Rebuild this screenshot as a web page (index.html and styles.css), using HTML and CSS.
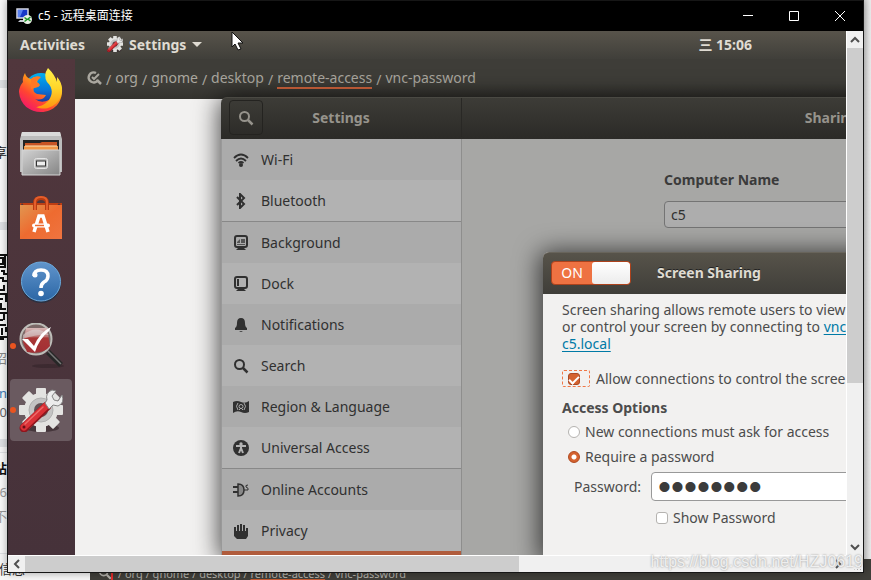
FILE: index.html
```html
<!DOCTYPE html>
<html lang="en">
<head>
<meta charset="utf-8">
<title>c5 - 远程桌面连接</title>
<link rel="stylesheet" href="styles.css">
</head>
<body>
<svg class="defs" width="0" height="0" aria-hidden="true">
  <defs>
    <linearGradient id="fox" x1=".9" y1="0" x2=".1" y2="1"><stop offset="0" stop-color="#fff44f"/><stop offset=".35" stop-color="#ffa515"/><stop offset=".65" stop-color="#ff4630"/><stop offset="1" stop-color="#f0087c"/></linearGradient>
    <linearGradient id="tail" x1="0" y1="0" x2="0" y2="1"><stop offset="0" stop-color="#fff14a"/><stop offset=".5" stop-color="#ffd52a"/><stop offset="1" stop-color="#ff9310"/></linearGradient>
    <linearGradient id="globe" x1="0" y1="0" x2="0" y2="1"><stop offset="0" stop-color="#00b0f0"/><stop offset=".5" stop-color="#0876d8"/><stop offset="1" stop-color="#271d82"/></linearGradient>
    <linearGradient id="metal" x1="0" y1="0" x2="1" y2="1"><stop offset="0" stop-color="#d2d2d2"/><stop offset="1" stop-color="#858585"/></linearGradient>
    <linearGradient id="bag" x1="0" y1="0" x2="1" y2="1"><stop offset="0" stop-color="#e19650"/><stop offset=".5" stop-color="#ee6b30"/><stop offset="1" stop-color="#ef7440"/></linearGradient>
    <linearGradient id="help" x1="0" y1="0" x2="0" y2="1"><stop offset="0" stop-color="#6195cc"/><stop offset="1" stop-color="#2b66a5"/></linearGradient>
    <linearGradient id="lens" x1="0" y1="0" x2="0" y2="1"><stop offset="0" stop-color="#d8b8b8"/><stop offset=".35" stop-color="#b9716f"/><stop offset=".4" stop-color="#a93736"/><stop offset="1" stop-color="#a22f34"/></linearGradient>
    <symbol id="gear" viewBox="0 0 44 44">
      <ellipse cx="23" cy="40" rx="17" ry="4" fill="#2f2025" opacity=".6"/>
      <g fill="#e3e3e1">
        <rect x="17" y="0" width="10" height="44" rx="1"/><rect x="17" y="0" width="10" height="44" rx="1" transform="rotate(45 22 22)"/><rect x="17" y="0" width="10" height="44" rx="1" transform="rotate(90 22 22)"/><rect x="17" y="0" width="10" height="44" rx="1" transform="rotate(135 22 22)"/>
        <circle cx="22" cy="22" r="17"/>
      </g>
      <circle cx="22" cy="22" r="12" fill="#c4c4c4" stroke="#b0b0b0"/><circle cx="22" cy="22" r="7" fill="#635155"/>
      <path d="M5 40L28 18" stroke="#8f161e" stroke-width="9" stroke-linecap="round"/>
      <path d="M5 39L27 18" stroke="#d93137" stroke-width="7" stroke-linecap="round"/>
      <path d="M6 36L24 19" stroke="#ee6a68" stroke-width="1.500" stroke-linecap="round"/>
      <path d="M26 15L28 12Q26 5 33 2L37 3L33 8L35 12L39 13L43 7Q46 15 39 18L34 17L30 21Z" fill="#ececec" stroke="#858585"/>
      <circle cx="5" cy="39" r="1.500" fill="#671019"/>
    </symbol>
    <symbol id="magnifier" viewBox="0 0 16 16"><circle cx="6.500" cy="6.500" r="4.500" fill="none" stroke="currentColor" stroke-width="2"/><path d="M10 10l4.500 4.500" stroke="currentColor" stroke-width="2.500"/></symbol>
  </defs>
</svg>

<aside class="backdrop-page" aria-hidden="true">
  <i class="card card-a"></i><i class="card card-b"></i><i class="card card-c"></i>
  <svg class="qr" width="7" height="88" viewBox="0 0 7 88"><path d="M0 1H7M0 13H6M5 1V13M0 4H3V10H0M1 17H4V20H7M0 24H3V27H7M4 31V36H0M0 40H5M6 39V48M0 45H3M1 49V55H6M0 59H7M4 60V66M0 66H3M0 71H6M2 74V81M6 73V78M0 83H7M4 85H0" fill="none" stroke="#111" stroke-width="2"/></svg>
  <span class="scrap s1">享</span><span class="scrap s2">招</span><span class="scrap s3">n</span><span class="scrap s4">0</span><span class="scrap s5">站</span><span class="scrap s6">6</span><span class="scrap s7">不</span><span class="scrap s8">信息</span>
</aside>
<div class="backdrop-shot" aria-hidden="true"><svg width="14" height="14"><use href="#magnifier"/></svg><i></i><span>/ org / gnome / desktop / <u>remote-access</u> / vnc-password</span></div>

<main class="rdp">
  <header class="titlebar">
    <svg width="16" height="16" viewBox="0 0 16 16"><path d="M1 1h11v9H1z" fill="#1638c8" stroke="#d7dae6" stroke-width="1.500"/><path d="M2 2h5l-3 7H2z" fill="#5a82f0"/><path d="M4 12h5v2H2z" fill="#c7cad4"/><circle cx="11.500" cy="11.500" r="4.500" fill="#e9f0e5"/><path d="M8.500 9.500l2.500 2-2.500 2M14.500 9l-2.500 2 2.500 2" fill="none" stroke="#1d9328" stroke-width="1.500"/></svg>
    <h1>c5 - 远程桌面连接</h1>
    <button aria-label="Minimize"><svg width="12" height="12" viewBox="0 0 12 12"><path d="M1 5.500h10"/></svg></button>
    <button aria-label="Maximize"><svg width="12" height="12" viewBox="0 0 12 12"><path d="M1.500 1.500h9v9h-9z"/></svg></button>
    <button aria-label="Close"><svg width="12" height="12" viewBox="0 0 12 12"><path d="M1 1l10 10M11 1L1 11"/></svg></button>
  </header>

  <div class="viewport">
    <div class="screen">
      <nav class="topbar">
        <button>Activities</button>
        <button class="appmenu"><svg width="16" height="16"><use href="#gear"/></svg>Settings<i class="caret"></i></button>
        <button class="clock">三 15:06</button>
      </nav>
      <nav class="dock">
        <a href="#" aria-label="Firefox"><svg width="46" height="46" viewBox="0 0 46 46">
          <circle cx="23" cy="23" r="17" fill="url(#globe)"/>
          <path d="M7 6Q4 11 5 15Q1 20 1 25C2 38 12 45 23 45C36 45 45 35 44 22Q43 16 40 12Q42 25 31 33Q23 37 17 32Q25 34 28 28L19 27Q14 25 16 20Q20 21 22 18Q17 15 21 10Q16 9 13 12Q8 11 7 6Z" fill="url(#fox)"/>
          <path d="M30 1Q25 8 29 15C36 22 34 28 31 33C27 38 20 40 18 40C32 46 45 34 44 21Q43 14 39 10L39 15Q37 8 30 1Z" fill="url(#tail)"/>
          <path d="M13 12Q18 8 23 10L18 15Q24 17 20 20L13 22Z" fill="#ff7824"/></svg></a>
        <a href="#" aria-label="Files"><svg width="44" height="46" viewBox="0 0 44 46"><path d="M3 1h38l2 7v33H1V8z" fill="#bcbcbc"/><path d="M3 1h38l1 4H2z" fill="#dadada"/><path d="M4 9h36v11H4z" fill="#242424"/><path d="M6 12h15l2-1h15v8H6z" fill="#c85423"/><path d="M5 15h34v4H5z" fill="#f19848"/><path d="M6 15h32" stroke="#ffe6b8"/><path d="M3 19h38v25H3z" fill="url(#metal)" stroke="#d4d4d4"/><rect x="15.500" y="27.500" width="13" height="10" rx="2" fill="#bbb" stroke="#e4e4e4"/><rect x="17.500" y="30" width="9" height="5" fill="#eee" stroke="#333"/></svg></a>
        <a href="#" aria-label="Ubuntu Software"><svg width="44" height="46" viewBox="0 0 44 46"><path d="M1 8h42v4l-3-4-3 4H6l-3-4-2 4z" fill="#bd3e13"/><path d="M1 10h42v34H1z" fill="url(#bag)"/><path d="M16 15V8q0-5 6-5t6 5v7" fill="none" stroke="#b73c12" stroke-width="4"/><path d="M16 15V7q0-5 6-5t6 5v8" fill="none" stroke="#e45e2c" stroke-width="2"/><path d="M15 37L20 21h4l5 16" fill="none" stroke="#fff" stroke-width="3.500"/><rect x="13" y="28.500" width="18" height="4" rx="2" fill="#fff"/><path d="M16 30.500h9" stroke="#ed6b30" stroke-width="1.500"/></svg></a>
        <a href="#" aria-label="Help"><svg width="42" height="42" viewBox="0 0 42 42"><circle cx="21" cy="22" r="20" fill="#202f43" opacity=".7"/><circle cx="21" cy="20.500" r="19.500" fill="url(#help)" stroke="#6caadc"/><path d="M14 15q0-6 7-6 7 0 7 6 0 4-4 6-3 2-3 6" fill="none" stroke="#fff" stroke-width="3.500"/><circle cx="15" cy="14" r="2.500" fill="#fff"/><circle cx="21" cy="32.500" r="2.800" fill="#fff"/></svg></a>
        <a href="#" class="running" aria-label="dconf Editor"><svg width="46" height="46" viewBox="0 0 46 46"><ellipse cx="30" cy="43" rx="16" ry="2" fill="#281b20" opacity=".4"/><path d="M30 29L43 42" stroke="#272727" stroke-width="5.500"/><path d="M30 28L43 41" stroke="#777" stroke-width="1.500"/><circle cx="18" cy="16" r="15.500" fill="#7c6867" stroke="#bdbdb8" stroke-width="2"/><path d="M8 5L29 5L32 23Q25 32 9 29L5 19Z" fill="url(#lens)"/><path d="M5 12Q18 1 31 12Q20 11 5 16Z" fill="#ddd" opacity=".55"/><path d="M4 16L10 16L16 23Q22 9 33 4L31 8Q21 16 17 29Z" fill="#fff"/></svg></a>
        <a href="#" class="running active" aria-label="Settings"><svg width="44" height="44"><use href="#gear"/></svg></a>
      </nav>
      <section class="dconf">
        <div class="pathbar"><svg width="16" height="16" viewBox="0 0 16 16"><path d="M9 2A5 5 0 1 0 11 9M10 9l4 4" fill="none" stroke="currentColor" stroke-width="2.500"/><path d="M5 6l2 2 5-5" fill="none" stroke="currentColor" stroke-width="2"/></svg><span>/</span><a href="#">org</a><span>/</span><a href="#">gnome</a><span>/</span><a href="#">desktop</a><span>/</span><a href="#" class="current">remote-access</a><span>/</span><a href="#">vnc-password</a></div>
      </section>

      <section class="settings">
        <header class="settings-head">
          <div class="head-left"><button aria-label="Search settings"><svg width="16" height="16"><use href="#magnifier"/></svg></button><h2>Settings</h2></div>
          <h2 class="head-right">Sharing</h2>
        </header>
        <div class="settings-body">
          <nav class="categories">
            <a href="#"><svg width="16" height="16" viewBox="0 0 16 16"><g fill="none" stroke="currentColor" stroke-width="1.800"><path d="M1 6q7-7 14 0M3 9q5-5 10 0M5.500 11q2.500-2 5 0"/></g><circle cx="8" cy="13" r="2"/></svg>Wi-Fi</a>
            <a href="#"><svg width="16" height="16" viewBox="0 0 16 16"><path d="M4 4l7 7-4 4V1l4 4-7 7" fill="none" stroke="currentColor" stroke-width="2"/></svg>Bluetooth</a>
            <a href="#" class="group"><svg width="16" height="16" viewBox="0 0 16 16"><rect x="2" y="1" width="12" height="11" rx="2" fill="none" stroke="currentColor" stroke-width="2"/><path d="M4 9h8v1H4zM4 7l3-3v4H4zM8 4h4v4H8z" opacity=".7"/><path d="M5 13h6l2 2H3z"/></svg>Background</a>
            <a href="#"><svg width="16" height="16" viewBox="0 0 16 16"><rect x="2" y="1" width="12" height="11" rx="2" fill="none" stroke="currentColor" stroke-width="2"/><path d="M4 3h2v7H4zM5 13h6l2 2H3z"/></svg>Dock</a>
            <a href="#"><svg width="16" height="16" viewBox="0 0 16 16"><path d="M8 1q4 0 4 5 0 4 2 5v2H2v-2q2-1 2-5 0-5 4-5zM6 14h4l-2 1z"/></svg>Notifications</a>
            <a href="#"><svg width="16" height="16"><use href="#magnifier"/></svg>Search</a>
            <a href="#"><svg width="16" height="16" viewBox="0 0 16 16"><path d="M0 3q4-2 8 0t8-1v11q-4 2-8 0t-8 1z"/><g fill="none" stroke="#aaa"><circle cx="8" cy="7.500" r="2"/><path d="M5 4q-3 3 0 7M11 4q3 3 0 7M6 11l2-2 2 2"/></g></svg>Region &amp; Language</a>
            <a href="#"><svg width="16" height="16" viewBox="0 0 16 16"><circle cx="8" cy="8" r="8"/><circle cx="8" cy="4" r="1.700" fill="#b2b2b2"/><path d="M3 6h10M8 6v3M8 8l-2 5M8 8l2 5" fill="none" stroke="#b2b2b2" stroke-width="2"/></svg>Universal Access</a>
            <a href="#" class="group"><svg width="16" height="16" viewBox="0 0 16 16"><path d="M0 5h5M0 10h5" stroke="currentColor" stroke-width="2"/><path d="M5 2q6 0 6 6t-6 6z" fill="#888" stroke="currentColor" stroke-width="1.500"/><path d="M15 3q-3 0-2 2 3 1 2 3h-4" fill="none" stroke="currentColor"/></svg>Online Accounts</a>
            <a href="#"><svg width="16" height="16" viewBox="0 0 16 16"><path d="M1 4h2v4h1V2h2v6h1V1h2v7h1V2h2v6h1V5h2v8l-2 3H4l-3-3z"/></svg>Privacy</a>
            <a href="#" class="selected" aria-label="Sharing"></a>
          </nav>
          <div class="panel"><label for="host">Computer Name</label><input id="host" type="text" value="c5"></div>
        </div>
      </section>

      <section class="dialog">
        <header><button class="switch" role="switch" aria-checked="true"><span>ON</span><i></i></button><h2>Screen Sharing</h2></header>
        <div class="dialog-body">
          <p>Screen sharing allows remote users to view<br>or control your screen by connecting to <a href="#">vnc://</a><br><a href="#">c5.local</a></p>
          <label class="allow"><span class="focus"><input type="checkbox" checked></span>Allow connections to control the screen</label>
          <h3>Access Options</h3>
          <label class="option"><input type="radio" name="access">New connections must ask for access</label>
          <label class="option"><input type="radio" name="access" checked>Require a password</label>
          <div class="password"><label for="pw">Password:</label><input id="pw" type="password" value="password"></div>
          <label class="show"><input type="checkbox">Show Password</label>
          <h3 class="networks">Networks</h3>
        </div>
      </section>
      <svg class="pointer" width="14" height="21" viewBox="0 0 14 21"><path d="M1 1v15l3-3 3 6 3-1-3-6h5z" fill="#fff" stroke="#111"/></svg>
    </div>
    <div class="vscroll"><button aria-label="Scroll up"><svg width="10" height="8" viewBox="0 0 10 8"><path d="M1 6l4-4 4 4"/></svg></button><i></i><button aria-label="Scroll down"><svg width="10" height="8" viewBox="0 0 10 8"><path d="M1 2l4 4 4-4"/></svg></button></div>
    <div class="hscroll"><button aria-label="Scroll left"><svg width="8" height="10" viewBox="0 0 8 10"><path d="M6 1L2 5l4 4"/></svg></button><i></i><button aria-label="Scroll right"><svg width="8" height="10" viewBox="0 0 8 10"><path d="M2 1l4 4-4 4"/></svg></button></div>
    <div class="grip"></div>
  </div>
</main>
<div class="watermark">https://blog.csdn.net/HZJ0619</div>
</body>
</html>
```
FILE: styles.css
```css
* { box-sizing: border-box; }
body {
  margin: 0;
  height: 100vh;
  position: relative;
  overflow: hidden;
  background: linear-gradient(to left, #ececec, #d2d2d2 8px, #ececec 9px);
  font: 14px/17px "Noto Sans", "Noto Sans CJK SC", sans-serif;
  white-space: nowrap;
}
a { color: inherit; text-decoration: none; }
h1, h2, h3, p { margin: 0; font-size: inherit; }
button { border: 0; padding: 0; background: none; color: inherit; font: inherit; }
input { margin: 0; font: inherit; }
svg { display: block; flex: none; fill: currentColor; }
.defs { position: absolute; }

/* Web page and picture partly hidden behind the window */
.backdrop-page { position: absolute; inset: 0 auto 0 0; width: 90px; overflow: hidden; background: #f7f7f7; }
.card { position: absolute; left: 0; width: 66px; border: solid #dfe1e4; border-width: 8px 0; background: #f9f9f9; }
.card-a { top: 80px; height: 150px; }
.card-b { top: 222px; height: 225px; }
.card-c { top: 452px; height: 102px; border-width: 1px 0; }
.qr { position: absolute; left: 0; top: 254px; }
.scrap { position: absolute; right: 83px; font-size: 13px; color: #444; }
.s1 { top: 144px; color: #222; }
.s2 { top: 350px; color: #888; }
.s3 { top: 385px; color: #3c78b4; }
.s4 { top: 404px; color: #666; }
.s5 { top: 460px; color: #111; font-weight: 700; }
.s6 { top: 484px; color: #999; }
.s7 { top: 508px; color: #999; }
.s8 { top: 561px; right: 65px; color: #333; }
.backdrop-shot {
  position: absolute; left: 90px; right: 0; bottom: 0; height: 21px;
  display: flex; align-items: center; gap: 5px; padding: 7px 8px 0;
  background: #403f3a; color: #b4b2ac; font-size: 11px;
}
.backdrop-shot i { width: 2px; height: 18px; margin-left: -6px; background: #e02c2c; }
.backdrop-shot u { text-decoration-color: #c55c34; }

/* Remote desktop window */
.rdp {
  position: absolute; inset: 0 7px 7px;
  display: flex; flex-direction: column;
  border: 1px solid #161616;
  background: #000;
  box-shadow: 0 0 8px rgba(0, 0, 0, .35);
}
.titlebar { display: flex; align-items: center; height: 30px; padding-left: 8px; color: #fff; flex: none; }
.titlebar h1 { flex: 1; margin-left: 6px; font: 12px/16px "Noto Sans", "Noto Sans CJK SC", sans-serif; }
.titlebar button { width: 46px; height: 30px; display: grid; place-items: center; }
.titlebar button svg { fill: none; stroke: #fff; }
.viewport { flex: 1; min-height: 0; display: grid; grid-template: 1fr 17px / 1fr 17px; background: #f0f0f0; }
.vscroll, .hscroll { display: flex; border: 0 solid #fff; background: #f0f0f0; }
.vscroll { flex-direction: column; border-left-width: 1px; }
.hscroll { border-top-width: 1px; }
.vscroll button, .hscroll button { flex: none; display: grid; place-items: center; width: 17px; height: 17px; }
.vscroll svg, .hscroll svg { fill: none; stroke: #505050; stroke-width: 2; }
.vscroll i { height: 64%; margin-bottom: auto; background: #cdcdcd; }
.hscroll i { width: 59%; margin-right: auto; background: #cdcdcd; }
.vscroll button { width: 16px; }
.hscroll button { height: 16px; }
.grip { margin: 7px 1px 1px 7px; background: radial-gradient(circle, #aaa 1px, transparent 1px) 0 0 / 3px 3px; clip-path: polygon(100% 0, 100% 100%, 0 100%); }

/* Remote GNOME desktop */
.screen {
  position: relative; overflow: hidden; min-width: 0;
  display: grid; grid-template: 28px 1fr / 67px 1fr;
  background: #f2f1f0;
}
.topbar {
  grid-column: 1 / -1; display: flex; align-items: center; gap: 22px; padding: 0 94px 2px 12px;
  background: linear-gradient(#58544b, #403f3a); color: #dfdbd2; font-weight: 700;
}
.appmenu { display: flex; align-items: center; gap: 6px; }
.caret { border: 5px solid transparent; border-top-color: currentColor; border-bottom: 0; }
.clock { margin-left: auto; }
.dock { display: flex; flex-direction: column; gap: 2px; padding-left: 2px; background: linear-gradient(#51373d, #46323a); }
.dock a { position: relative; width: 62px; height: 62px; flex: none; display: grid; place-items: center; border-radius: 4px; }
.dock .active { background: #6a5a60; }
.running::before { content: ""; position: absolute; left: 0; top: 28px; width: 6px; height: 6px; border-radius: 50%; background: #e95420; }
.dconf { min-width: 0; }
.pathbar {
  display: flex; align-items: center; gap: 4px; height: 40px; padding: 0 12px;
  background: linear-gradient(#3e3d38 60%, #33322e); color: #aaa79f;
}
.pathbar svg { margin-right: -1px; }
.pathbar a { line-height: 18px; border-bottom: 2px solid transparent; }
.pathbar .current { border-color: #d5663e; }

.settings {
  position: absolute; left: 213px; top: 66px; bottom: 0; width: 980px;
  display: flex; flex-direction: column;
  border-radius: 6px 6px 0 0;
  box-shadow: 0 3px 24px 2px rgba(0, 0, 0, .7);
  color: #303030;
}
.settings-head {
  display: flex; flex: none; height: 42px; padding-bottom: 2px;
  border-top: 1px solid #4a4943; border-radius: 6px 6px 0 0;
  background: linear-gradient(#3d3c37, #2b2a27); color: #96938c;
}
.head-left { display: grid; grid-template-columns: 34px 1fr 34px; align-items: center; width: 241px; padding: 0 8px; border-right: 1px solid #292825; text-align: center; }
.head-left button { height: 35px; display: grid; place-items: center; border: 1px solid #242320; border-radius: 4px; }
.head-right { flex: 1; align-self: center; text-align: center; }
.settings-body { flex: 1; min-height: 0; display: flex; overflow: hidden; background: #a7a7a5; }
.categories { width: 241px; flex: none; border-right: 1px solid #8e8e8d; border-left: 1px solid #999; }
.categories a { display: flex; align-items: center; gap: 12px; height: 41px; padding-left: 11px; background: #ababab; }
.categories a:nth-child(even) { background: #b2b2b2; }
.categories .group { height: 42px; border-top: 1px solid #888; }
.categories .selected { background: #b05c3c; }
.panel { flex: 1; display: flex; flex-direction: column; gap: 13px; padding: 32px 202px; }
.panel label { font-weight: 700; color: #3b3b3b; }
.panel input { height: 27px; padding: 0 6px; border: 1px solid #747474; border-radius: 4px; background: #adadad; color: #303030; }

.dialog {
  position: absolute; left: 535px; top: 221px; bottom: 0; width: 460px;
  border-radius: 6px 6px 0 0; background: #f2f1f0; color: #4c4c4c;
  box-shadow: 0 3px 24px 4px rgba(0, 0, 0, .65);
}
.dialog header {
  display: flex; align-items: center; gap: 26px; height: 42px; padding: 0 8px 2px;
  border-top: 1px solid #68645b; border-radius: 6px 6px 0 0;
  background: linear-gradient(#57534a, #3f3e39); color: #dfdbd2; text-shadow: 0 -1px #222;
}
.switch { display: flex; width: 80px; height: 24px; border: 1px solid #ad421c; border-radius: 4px; background: #ee7242; color: #fff; overflow: hidden; text-shadow: none; }
.switch span { flex: 1; line-height: 22px; }
.switch i { width: 38px; border-radius: 3px; background: linear-gradient(#fff, #ececec); }
.dialog-body { padding: 7px 19px; }
.dialog-body p a { color: #007aa6; text-decoration: underline; text-underline-offset: 2px; }
.allow { display: flex; align-items: center; gap: 6px; margin-top: 18px; }
.focus { display: grid; place-items: center; width: 28px; height: 17px; padding-right: 4px; border: 1px dashed #f07746; border-radius: 2px; }
.dialog h3 { margin-top: 12px; }
.option { display: flex; align-items: center; gap: 5px; margin: 7px 0 0 6px; }
.option + .option { margin-top: 8px; }
input[type="checkbox"], input[type="radio"] { appearance: none; width: 12px; height: 12px; border: 1px solid #b5b3b0; border-radius: 3px; background: #fff; flex: none; }
input[type="radio"] { border-radius: 50%; }
input[type="checkbox"]:checked { border-color: #aa4a26; background: #d4622f; display: grid; place-items: center; }
input[type="checkbox"]:checked::after { content: ""; width: 4px; height: 8px; margin-bottom: 3px; border: solid #fff; border-width: 0 2px 2px 0; transform: rotate(45deg); }
input[type="radio"]:checked { border-color: #b0481e; background: radial-gradient(circle, #fff 2px, #d4622f 3px); }
.password { display: flex; align-items: center; gap: 10px; margin: 7px 0 0 12px; }
.password input { flex: 1; height: 29px; padding: 0 6px; border: 1px solid #999; border-radius: 4px; background: #fff; color: #3b3b3b; font: 37px/27px "Liberation Sans", sans-serif; }
.show { display: flex; align-items: center; gap: 5px; margin: 8px 0 0 94px; }
.dialog .networks { margin-top: 26px; }
.pointer { position: absolute; left: 223px; top: 0; }
.watermark { position: absolute; right: 8px; bottom: 9px; font: 16px/18px "Liberation Sans", sans-serif; color: rgba(255, 255, 255, .8); text-shadow: 0 0 2px #888; }
```
